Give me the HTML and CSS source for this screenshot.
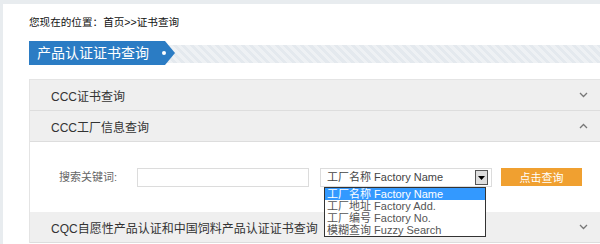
FILE: index.html
```html
<!DOCTYPE html>
<html lang="zh-CN">
<head>
    <meta charset="UTF-8">
    <title>证书查询</title>
    <link rel="stylesheet" href="styles.css">
</head>
<body>
    <div class="page">
        <div class="crumb">您现在的位置：首页&gt;&gt;证书查询</div>
        <div class="title-bar">
            <div class="tab">产品认证证书查询<span class="dot"></span></div>
        </div>
        <div class="panel">
            <div class="acc-head">
                <span>CCC证书查询</span>
                <svg class="chev" width="9" height="6" viewBox="0 0 9 6"><polyline points="1,1 4.5,4.5 8,1" fill="none" stroke="#777" stroke-width="1.3"/></svg>
            </div>
            <div class="acc-head">
                <span>CCC工厂信息查询</span>
                <svg class="chev" width="9" height="6" viewBox="0 0 9 6"><polyline points="1,5 4.5,1.5 8,5" fill="none" stroke="#777" stroke-width="1.3"/></svg>
            </div>
            <div class="acc-body">
                <div class="search-row">
                    <label class="label">搜索关键词:</label>
                    <input class="keyword" type="text">
                    <div class="select">
                        <span class="select-text">工厂名称 Factory Name</span>
                        <span class="select-btn"><svg width="7" height="4" viewBox="0 0 7 4"><polygon points="0,0 7,0 3.5,4" fill="#000"/></svg></span>
                        <ul class="options">
                            <li class="selected">工厂名称 Factory Name</li>
                            <li>工厂地址 Factory Add.</li>
                            <li>工厂编号 Factory No.</li>
                            <li>模糊查询 Fuzzy Search</li>
                        </ul>
                    </div>
                    <button class="go">点击查询</button>
                </div>
            </div>
            <div class="acc-head">
                <span>CQC自愿性产品认证和中国饲料产品认证证书查询</span>
                <svg class="chev" width="9" height="6" viewBox="0 0 9 6"><polyline points="1,1 4.5,4.5 8,1" fill="none" stroke="#777" stroke-width="1.3"/></svg>
            </div>
        </div>
    </div>
</body>
</html>
```

FILE: styles.css
```css
body {
    margin: 0;
    padding: 0;
    background-color: #e8ecef;
    font-family: "Liberation Sans", "Noto Sans CJK SC", sans-serif;
    color: #222;
}
.page {
    margin: 4px 0 0 3px;
    padding-left: 26px;
    background-color: #fff;
    height: 240px;
    overflow: hidden;
}
.crumb {
    height: 37px;
    padding-top: 11px;
    box-sizing: border-box;
    font-size: 10.6px;
    line-height: 14px;
    color: #111;
}
.title-bar {
    height: 24px;
    background: repeating-linear-gradient(45deg, #e4e9ee 0, #e4e9ee 3px, #eef1f4 3px, #eef1f4 6px) 0 4px / 100% 18px no-repeat;
}
.tab {
    position: relative;
    width: 146px;
    height: 24px;
    padding-left: 8px;
    box-sizing: border-box;
    background-color: #2b7cc4;
    clip-path: polygon(0 0, 136px 0, 146px 12px, 136px 24px, 0 24px);
    color: #fff;
    font-size: 14px;
    line-height: 24px;
}
.dot {
    position: absolute;
    left: 133px;
    top: 10px;
    width: 4px;
    height: 4px;
    border-radius: 50%;
    background-color: #fff;
}
.panel {
    margin-top: 14px;
    border-top: 1px solid #e4e4e4;
    border-left: 1px solid #e4e4e4;
}
.acc-head {
    height: 30px;
    padding: 0 12px 0 21px;
    display: flex;
    align-items: center;
    justify-content: space-between;
    background-color: #efefef;
    border-bottom: 1px solid #dddddd;
    font-size: 12px;
    color: #333;
}
.acc-body {
    height: 70px;
    padding: 26px 0 0 29px;
    box-sizing: border-box;
    background-color: #fff;
}
.search-row {
    display: flex;
    align-items: flex-start;
    font-size: 11px;
}
.label {
    width: 78px;
    line-height: 19px;
    color: #666;
}
.keyword {
    width: 172px;
    height: 19px;
    margin: 0;
    padding: 0;
    box-sizing: border-box;
    border: 1px solid #dcdcdc;
}
.select {
    position: relative;
    width: 172px;
    height: 19px;
    margin-left: 11px;
    box-sizing: border-box;
    border: 1px solid #dcdcdc;
    display: flex;
    align-items: center;
    color: #444;
}
.select-text {
    flex: 1;
    padding-left: 6px;
    line-height: 17px;
}
.select-btn {
    width: 13px;
    height: 15px;
    margin-right: 3px;
    box-sizing: border-box;
    border: 1px solid #555;
    background-color: #dedede;
    display: flex;
    align-items: center;
    justify-content: center;
}
.options {
    position: absolute;
    left: 3px;
    top: 18px;
    width: 162px;
    margin: 0;
    padding: 0;
    list-style: none;
    box-sizing: border-box;
    border: 1px solid #333;
    background-color: #fff;
    z-index: 2;
}
.options li {
    height: 12px;
    padding-left: 2px;
    line-height: 12px;
    color: #555;
    white-space: nowrap;
}
.options li.selected {
    background-color: #3399ff;
    color: #fff;
}
.go {
    width: 81px;
    height: 18px;
    margin-left: 9px;
    padding: 0;
    border: none;
    background-color: #f0a030;
    color: #fff;
    font-family: inherit;
    font-size: 11px;
}
```
